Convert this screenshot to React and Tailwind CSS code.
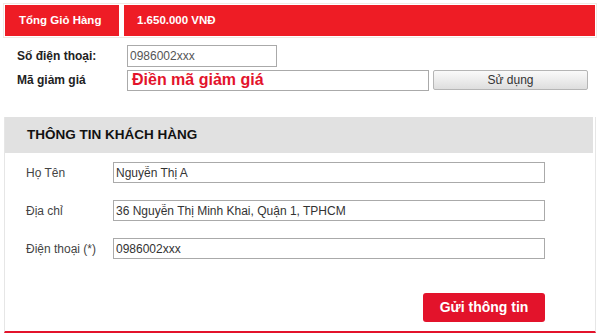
import React from "react";

const fields = [
  { label: "Họ Tên", value: "Nguyễn Thị A" },
  { label: "Địa chỉ", value: "36 Nguyễn Thị Minh Khai, Quận 1, TPHCM" },
  { label: "Điện thoại (*)", value: "0986002xxx" },
];

const App = () => {
  return (
    <div className="w-[600px] h-[333px] overflow-hidden bg-white text-[#333] font-['Liberation_Sans',Arial,sans-serif]">
      {/* cart total */}
      <div className="mx-[3px] mt-[3px] border border-[#f0e8e4] p-[1px] flex gap-[5px] h-[35px]">
        <div className="w-[114px] bg-[#ee1c25] flex items-center pl-[14px] text-white text-[11.5px] font-bold">
          Tổng Giỏ Hàng
        </div>
        <div className="flex-1 bg-[#ee1c25] flex items-center pl-[13px] text-white text-[11.5px] font-bold">
          1.650.000 VNĐ
        </div>
      </div>

      {/* phone + coupon */}
      <div className="pl-[17px] pt-[6px]">
        <div className="flex items-center h-[23px]">
          <div className="w-[110px] text-[12px] font-bold text-[#222]">Số điện thoại:</div>
          <input
            readOnly
            value="0986002xxx"
            className="w-[150px] h-[22px] border border-[#aaa] px-[2px] text-[12px] text-[#555] outline-none"
          />
        </div>
        <div className="flex items-center h-[22px] mt-[2px]">
          <div className="w-[110px] text-[12px] font-bold text-[#222]">Mã giảm giá</div>
          <div className="w-[302px] h-[21px] border border-[#aaa] px-[4px] flex items-center text-[16px] font-bold text-[#e3132b] leading-none">
            Điền mã giảm giá
          </div>
          <button className="ml-[4px] w-[155px] h-[20px] border border-[#b5b5b5] rounded-[2px] bg-gradient-to-b from-[#fafafa] to-[#dedede] text-[12px] text-[#333]">
            Sử dụng
          </button>
        </div>
      </div>

      {/* customer info */}
      <div className="mt-[26px] ml-[4px] w-[592px] h-[216px] border-x border-[#e6e6e6] border-b-2 border-b-[#e3132b] flex flex-col">
        <div className="mr-[2px] h-[36px] bg-[#e1e1e1] flex items-center pl-[22px] text-[13.5px] font-bold text-[#111]">
          THÔNG TIN KHÁCH HÀNG
        </div>
        <div className="flex flex-col gap-[17px] pt-[9px]">
          {fields.map((f) => (
            <div key={f.label} className="flex items-center h-[21px]">
              <div className="w-[108px] pl-[21px] text-[12px] text-[#444]">{f.label}</div>
              <input
                readOnly
                value={f.value}
                className="w-[432px] h-[21px] border border-[#aaa] px-[2px] text-[12px] text-[#333] outline-none"
              />
            </div>
          ))}
        </div>
        <div className="flex justify-end pr-[50px] mt-[34px]">
          <button className="w-[122px] h-[29px] rounded-[3px] bg-[#e3132b] text-white text-[14px] font-bold">
            Gửi thông tin
          </button>
        </div>
      </div>
    </div>
  );
};

export default App;
